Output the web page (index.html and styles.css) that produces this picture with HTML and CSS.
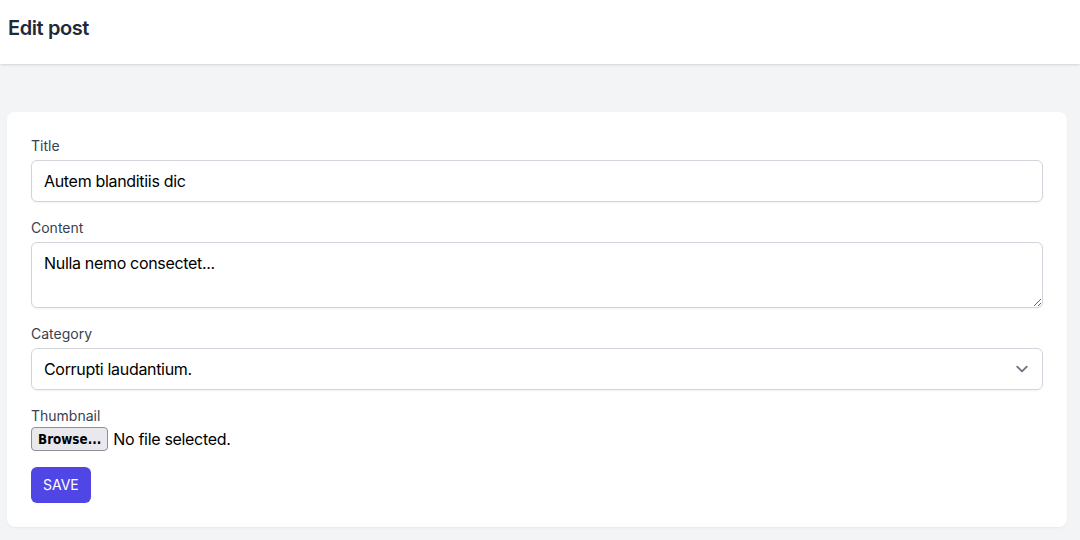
FILE: index.html
```html
<!DOCTYPE html>
<html>
<head>
<meta charset="utf-8">
<link rel="stylesheet" href="styles.css">
</head>
<body>
<header class="topbar"><h2 class="title">Edit post</h2></header>
<main class="main">
  <div class="card">
    <form class="form">
      <div class="field">
        <label class="label">Title</label>
        <input class="input" type="text" value="Autem blanditiis dic">
      </div>
      <div class="field">
        <label class="label">Content</label>
        <textarea class="input textarea" rows="2">Nulla nemo consectet...</textarea>
      </div>
      <div class="field">
        <label class="label">Category</label>
        <div class="select">
          <span>Corrupti laudantium.</span>
          <svg class="chev" viewBox="0 0 20 20" width="24" height="24"><path d="M6 8l4 4 4-4" fill="none" stroke="#6b7280" stroke-width="1.5" stroke-linecap="round" stroke-linejoin="round"/></svg>
        </div>
      </div>
      <div class="field">
        <label class="label label-tight">Thumbnail</label>
        <div class="file"><span class="browse">Browse...</span><span class="nofile">No file selected.</span></div>
      </div>
      <div><button type="button" class="save">SAVE</button></div>
    </form>
  </div>
</main>
</body>
</html>
```
FILE: styles.css
```css
* { box-sizing: border-box; }
html, body { margin: 0; padding: 0; }
body {
  background: #f3f4f6;
  font-family: Inter, "Liberation Sans", sans-serif;
  color: #111827;
  width: 1080px;
  height: 540px;
  overflow: hidden;
}
.topbar {
  background: #fff;
  height: 64px;
  padding: 14px 8px 0;
  box-shadow: 0 1px 3px rgba(0,0,0,.1), 0 1px 2px -1px rgba(0,0,0,.1);
  position: relative;
}
.title {
  margin: 0;
  font-size: 20px;
  line-height: 28px;
  font-weight: 600;
  color: #1f2937;
  letter-spacing: -0.02em;
}
.main { padding-top: 48px; }
.card {
  margin: 0 13px 0 7px;
  background: #fff;
  border-radius: 8px;
  box-shadow: 0 1px 2px rgba(0,0,0,.05);
  padding: 24px;
}
.form { display: flex; flex-direction: column; gap: 16px; }
.field { display: flex; flex-direction: column; }
.label {
  font-size: 14px;
  line-height: 20px;
  color: #374151;
  margin-bottom: 4px;
}
.label-tight { margin-bottom: 1px; }
.input {
  font-family: inherit;
  font-size: 16px;
  line-height: 24px;
  letter-spacing: -0.02em;
  padding: 8px 12px;
  border: 1px solid #d1d5db;
  border-radius: 6px;
  box-shadow: 0 1px 2px rgba(0,0,0,.05);
  color: #000;
  width: 100%;
  height: 42px;
  outline: none;
  margin: 0;
}
.textarea { height: 66px; resize: vertical; display: block; }
.select {
  display: flex;
  align-items: center;
  justify-content: space-between;
  height: 42px;
  padding: 0 8px 0 12px;
  border: 1px solid #d1d5db;
  border-radius: 6px;
  box-shadow: 0 1px 2px rgba(0,0,0,.05);
  font-size: 16px;
  letter-spacing: -0.02em;
  color: #000;
}
.chev { display: block; }
.file { display: flex; align-items: center; gap: 5px; height: 24px; font-size: 16px; letter-spacing: -0.02em; color: #000; }
.browse {
  display: inline-flex;
  align-items: center;
  height: 24px;
  padding: 0 6px;
  background: #e9e9ed;
  border: 1px solid #8f8f9d;
  border-radius: 4px;
  font-family: "DejaVu Sans Condensed", "DejaVu Sans", sans-serif;
  font-stretch: condensed;
  font-weight: 700;
  font-size: 13.33px;
  letter-spacing: 0;
  color: #000;
}
.save {
  background: #4f46e5;
  color: #fff;
  border: none;
  border-radius: 6px;
  font-family: inherit;
  font-size: 14px;
  line-height: 20px;
  padding: 8px 12px;
  height: 36px;
}
```
